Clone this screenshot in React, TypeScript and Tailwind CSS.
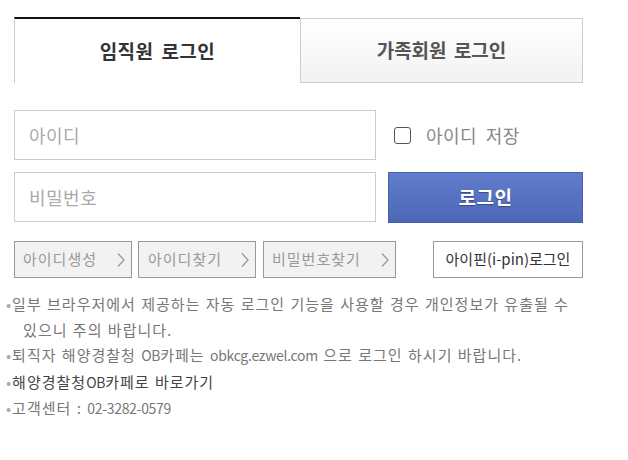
import { useState } from "react";

const font = { fontFamily: '"Noto Sans CJK KR", "Noto Sans", sans-serif' };

function Chevron() {
  return (
    <svg width="10" height="16" viewBox="0 0 10 16" className="shrink-0">
      <path d="M2 1.5 L8 8 L2 14.5" fill="none" stroke="#999" strokeWidth="1.3" />
    </svg>
  );
}

// latin fragments in the notes are narrower in the original
function L({ children }: { children: React.ReactNode }) {
  return <span className="text-[14px] tracking-[-0.3px]">{children}</span>;
}

export default function App() {
  const [saveId, setSaveId] = useState(false);

  return (
    <div className="w-[628px] h-[460px] bg-white pt-[17px]" style={font}>
      <div className="w-[569px] ml-[14px]">
        {/* tabs */}
        <div className="flex h-[66px]">
          <div className="w-[286px] border-t-2 border-t-[#111] border-l border-l-[#ccc] bg-white flex items-center justify-center">
            <span className="text-[19px] font-bold text-[#333] tracking-[0.5px] [word-spacing:3px]">임직원 로그인</span>
          </div>
          <div className="flex-1 mt-[1px] h-[65px] border border-[#ccc] bg-gradient-to-b from-white to-[#f2f2f2] flex items-center justify-center">
            <span className="text-[19px] font-bold text-[#555] tracking-[0px] [word-spacing:3px]">가족회원 로그인</span>
          </div>
        </div>

        {/* form */}
        <div className="mt-[27px] flex gap-[12px]">
          <div className="flex flex-col gap-[12px] w-[362px]">
            <input
              placeholder="아이디"
              className="h-[50px] border border-[#ccc] px-[14px] text-[18px] tracking-[0.5px] text-[#333] placeholder:text-[#aaa] outline-none"
            />
            <input
              type="password"
              placeholder="비밀번호"
              className="h-[50px] border border-[#ccc] px-[14px] text-[18px] tracking-[0.5px] text-[#333] placeholder:text-[#aaa] outline-none"
            />
          </div>
          <div className="flex flex-col w-[195px]">
            <label className="h-[50px] flex items-center pl-[6px] gap-[15px] cursor-pointer" onClick={() => setSaveId(!saveId)}>
              <span className="w-[17px] h-[17px] rounded-[3px] border-[1.5px] border-[#555] bg-white flex items-center justify-center">
                {saveId && <span className="w-[9px] h-[9px] bg-[#555]" />}
              </span>
              <span className="text-[18px] text-[#888] tracking-[0.5px] [word-spacing:4px]">아이디 저장</span>
            </label>
            <button className="mt-[12px] h-[51px] border border-[#4560ad] bg-gradient-to-b from-[#607dcb] to-[#4c67b6] text-white text-[19px] font-bold tracking-[0.5px] [text-shadow:0_1px_1px_rgba(0,0,0,0.35)]">
              로그인
            </button>
          </div>
        </div>

        {/* small buttons */}
        <div className="mt-[18px] flex items-center">
          <button className="w-[118px] h-[37px] border border-[#999] bg-[#f2f2f2] flex items-center justify-between pl-[8px] pr-[5px] text-[15px] text-[#999] tracking-[1px]">
            아이디생성 <Chevron />
          </button>
          <button className="ml-[6px] w-[118px] h-[37px] border border-[#999] bg-[#f2f2f2] flex items-center justify-between pl-[9px] pr-[5px] text-[15px] text-[#999] tracking-[1px]">
            아이디찾기 <Chevron />
          </button>
          <button className="ml-[7px] w-[133px] h-[37px] border border-[#999] bg-[#f2f2f2] flex items-center justify-between pl-[8px] pr-[5px] text-[15px] text-[#999] tracking-[1px]">
            비밀번호찾기 <Chevron />
          </button>
          <button className="ml-auto w-[150px] h-[37px] border border-[#999] bg-white text-[15px] text-[#333] tracking-[0px]">
            아이핀(i-pin)로그인
          </button>
        </div>
      </div>

      {/* notes */}
      <ul className="mt-[13px] ml-[6px] text-[15px] leading-[25.5px] text-[#777] tracking-[1px] [word-spacing:1px]">
        <li className="flex">
          <span className="text-[#aaa] mr-[1px] tracking-normal">•</span>
          <span>
            일부 브라우저에서 제공하는 자동 로그인 기능을 사용할 경우 개인정보가 유출될 수
            <br />
            <span className="pl-[11px]">있으니 주의 바랍니다.</span>
          </span>
        </li>
        <li className="flex">
          <span className="text-[#aaa] mr-[1px] tracking-normal">•</span>
          <span>
            퇴직자 해양경찰청 <L>OB</L>카페는 <L>obkcg.ezwel.com</L> 으로 로그인 하시기 바랍니다.
          </span>
        </li>
        <li className="flex">
          <span className="text-[#aaa] mr-[1px] tracking-normal">•</span>
          <span className="text-[#444]">
            해양경찰청<L>OB</L>카페로 바로가기
          </span>
        </li>
        <li className="flex">
          <span className="text-[#aaa] mr-[1px] tracking-normal">•</span>
          <span>
            고객센터 : <L>02-3282-0579</L>
          </span>
        </li>
      </ul>
    </div>
  );
}
